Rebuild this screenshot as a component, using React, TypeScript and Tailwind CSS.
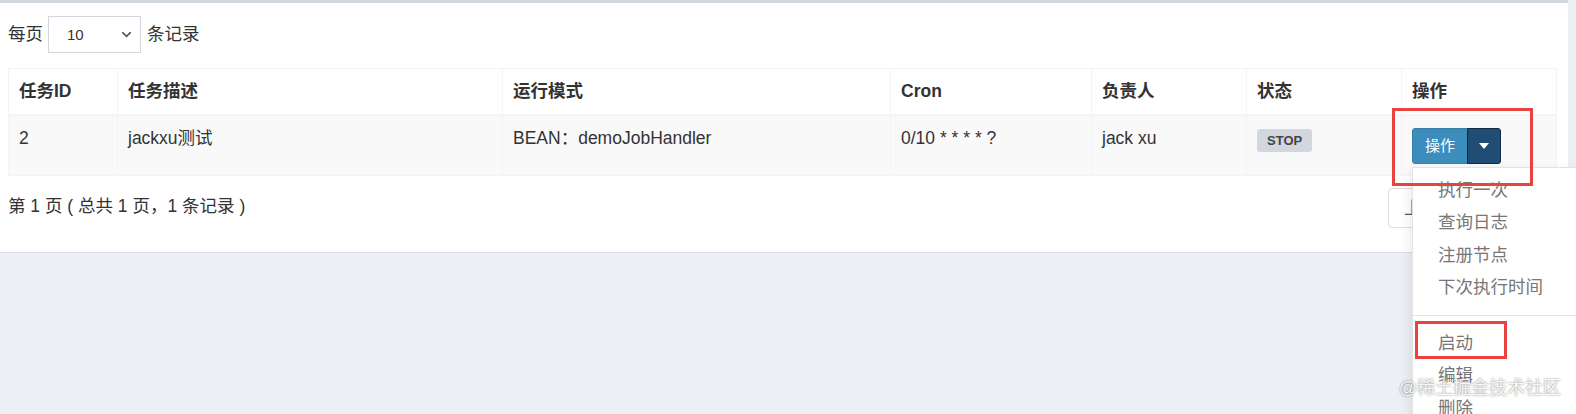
import { ChevronDown } from 'lucide-react'

const columns = [
  { title: '任务ID', width: 'w-[109px]' },
  { title: '任务描述', width: 'w-[385px]' },
  { title: '运行模式', width: 'w-[388px]' },
  { title: 'Cron', width: 'w-[201px]' },
  { title: '负责人', width: 'w-[155px]' },
  { title: '状态', width: 'w-[155px]' },
  { title: '操作', width: 'w-[155px]' },
]

const menuTop = ['执行一次', '查询日志', '注册节点', '下次执行时间']
const menuBottom = ['启动', '编辑', '删除', '复制']

function ActionButton() {
  return (
    <div className="relative mt-[2px] inline-flex">
      <button className="h-[36px] rounded-l-[3px] border border-[#367fa9] bg-[#3c8dbc] px-[12px] text-[15px] leading-[20px] text-white">
        操作
      </button>
      <button className="-ml-px flex h-[36px] w-[34px] items-center justify-center rounded-r-[3px] border border-[#122b40] bg-[#204d74]">
        <span className="h-0 w-0 border-x-[5px] border-t-[6px] border-x-transparent border-t-white" />
      </button>

      {/* open dropdown */}
      <div className="absolute left-0 top-full z-10 mt-[3px] w-[220px] border border-[#e3e3e3] bg-white py-[6px] shadow-[0_6px_12px_rgba(0,0,0,0.12)]">
        {menuTop.map((item) => (
          <div key={item} className="whitespace-nowrap px-[25px] py-[3.75px] text-[17.5px] leading-[25px] text-[#777]">
            {item}
          </div>
        ))}
        <div className="my-[11px] h-px bg-[#e5e5e5]" />
        {menuBottom.map((item) => (
          <div key={item} className="whitespace-nowrap px-[25px] py-[3.75px] text-[17.5px] leading-[25px] text-[#777]">
            {item}
          </div>
        ))}
      </div>
    </div>
  )
}

export default function App() {
  return (
    <div className="relative h-[414px] w-[1576px] overflow-hidden bg-[#ecf0f5] font-['Liberation_Sans','Noto_Sans_CJK_SC',sans-serif] text-[#333]">
      <div className="mr-[8px] border-t-[3px] border-b border-[#d2d6de] border-b-[#dadee5] bg-white px-[8px] pt-[13px] pb-[24px]">
        {/* page size */}
        <div className="flex h-[37px] items-center text-[17.5px] leading-[25px]">
          <span>每页</span>
          <div className="ml-[5px] mr-[6px] flex h-[37px] w-[93px] items-center justify-between border border-[#d2d6de] pl-[18px] pr-[6px]">
            <span className="text-[15px]">10</span>
            <ChevronDown size={15} strokeWidth={2.5} className="text-[#555]" />
          </div>
          <span>条记录</span>
        </div>

        <table className="mt-[15px] w-[1548px] table-fixed border-collapse border border-[#f4f4f4] text-[17.5px] leading-[25px]">
          <thead>
            <tr>
              {columns.map((c) => (
                <th
                  key={c.title}
                  className={`${c.width} border border-b-2 border-[#f4f4f4] px-[10px] pt-[10px] pb-[10px] text-left align-bottom font-bold`}
                >
                  {c.title}
                </th>
              ))}
            </tr>
          </thead>
          <tbody>
            <tr className="bg-[#f9f9f9]">
              <td className="border border-[#f4f4f4] px-[10px] py-[10px] align-top">2</td>
              <td className="border border-[#f4f4f4] px-[10px] py-[10px] align-top">jackxu测试</td>
              <td className="border border-[#f4f4f4] px-[10px] py-[10px] align-top">BEAN：demoJobHandler</td>
              <td className="border border-[#f4f4f4] px-[10px] py-[10px] align-top">0/10 * * * * ?</td>
              <td className="border border-[#f4f4f4] px-[10px] py-[10px] align-top">jack xu</td>
              <td className="border border-[#f4f4f4] px-[10px] py-[10px] align-top">
                <span className="mt-[3px] inline-block h-[23px] rounded-[3px] bg-[#d2d6de] px-[10px] align-top text-[13px] font-bold leading-[23px] text-[#444]">
                  STOP
                </span>
              </td>
              <td className="border border-[#f4f4f4] px-[10px] pt-[10px] pb-[11px] align-top">
                <ActionButton />
              </td>
            </tr>
          </tbody>
        </table>

        <div className="mt-[12px] flex h-[40px] w-[1548px] items-center justify-between">
          <span className="pb-[3px] text-[17.5px] leading-[25px]">第 1 页 ( 总共 1 页，1 条记录 )</span>
          <div className="flex">
            <span className="h-[40px] rounded-l-[4px] border border-[#ddd] px-[15px] text-[17.5px] leading-[38px] text-[#555]">上一页</span>
            <span className="-ml-px h-[40px] rounded-r-[4px] border border-[#ddd] px-[15px] text-[17.5px] leading-[38px] text-[#555]">下一页</span>
          </div>
        </div>
      </div>

      {/* annotation boxes */}
      <div className="pointer-events-none absolute left-[1392px] top-[108px] z-20 h-[78px] w-[141px] border-[3px] border-[#e8433e]" />
      <div className="pointer-events-none absolute left-[1415px] top-[321px] z-20 h-[38px] w-[92px] border-[3px] border-[#e8433e]" />

      {/* watermark */}
      <div className="pointer-events-none absolute right-[15px] top-[376px] z-30 text-[18px] leading-[25px] text-white/90 [text-shadow:0_0_2px_rgba(0,0,0,0.55)]">
        @稀土掘金技术社区
      </div>
    </div>
  )
}
